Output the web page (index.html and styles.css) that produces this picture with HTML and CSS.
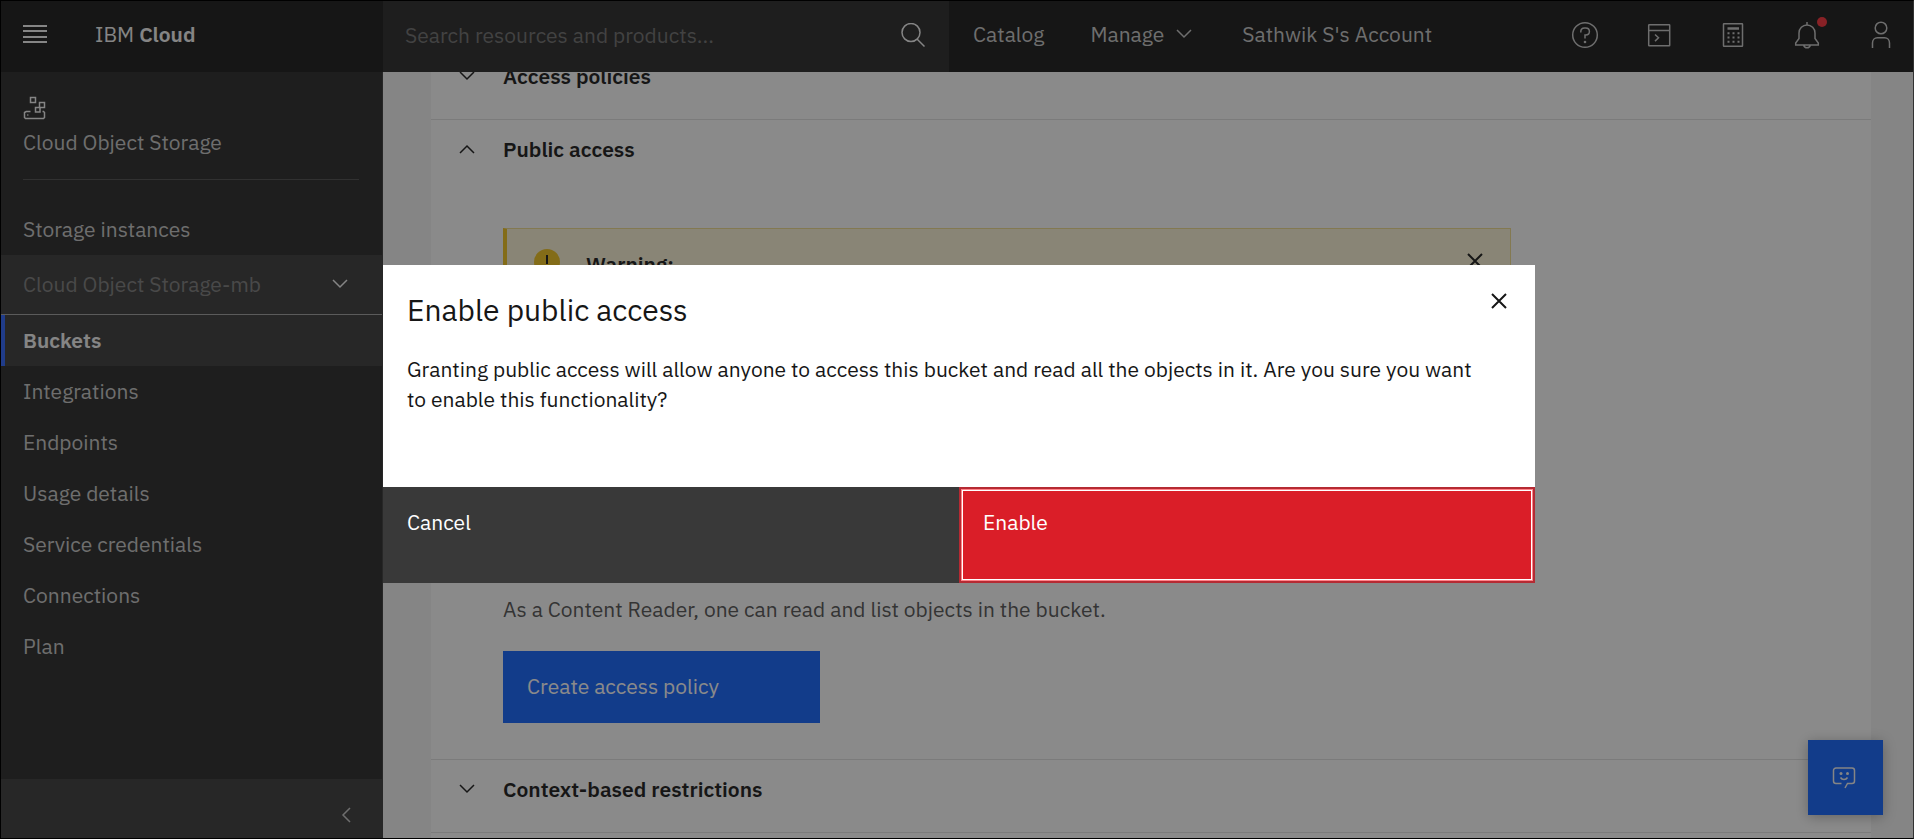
FILE: index.html
```html
<!DOCTYPE html>
<html lang="en">
<head>
<meta charset="utf-8">
<meta name="viewport" content="width=device-width, initial-scale=1">
<title>Buckets - IBM Cloud</title>
<link rel="stylesheet" href="styles.css">
</head>
<body>
<svg class="sprite" aria-hidden="true">
  <symbol id="chevron" viewBox="0 0 24 24"><path d="M5 8l7 7 7-7"/></symbol>
  <symbol id="close" viewBox="0 0 24 24"><path d="M5 5l14 14M19 5L5 19"/></symbol>
</svg>
<div class="page">
  <header class="topbar">
    <div class="brand">
      <button class="icon-button" type="button" aria-label="Menu">
        <svg class="icon-24 bright" viewBox="0 0 24 24"><path stroke-width="2" d="M0 4h24M0 9h24M0 15h24M0 20h24"/></svg>
      </button>
      <a class="brand-name" href="#">IBM <strong>Cloud</strong></a>
    </div>
    <form class="search">
      <input class="search-input" type="text" aria-label="Search" placeholder="Search resources and products...">
      <button class="icon-button" type="button" aria-label="Search">
        <svg class="icon-24 bright" viewBox="0 0 24 24"><ellipse cx="10" cy="9.500" rx="9" ry="9"/><path d="M16 16l7.500 7.500"/></svg>
      </button>
    </form>
    <nav class="top-links">
      <a class="top-link" href="#">Catalog</a>
      <button class="top-link" type="button">Manage <svg class="icon-24"><use href="#chevron"/></svg></button>
      <a class="top-link" href="#">Sathwik S's Account</a>
    </nav>
    <div class="tools">
      <button class="icon-button" type="button" aria-label="Help">
        <svg class="icon-30" viewBox="0 0 30 30"><circle cx="15" cy="15" r="12.300"/><path d="M10.800 12.500v-.7c0-2.200 1.500-3.800 3.700-3.800h1.200c2.100 0 3.700 1.500 3.700 3.500s-1.600 3.500-3.700 3.500H15v3.500"/><circle class="fill" cx="15" cy="22" r="1.300"/></svg>
      </button>
      <button class="icon-button" type="button" aria-label="Shell">
        <svg class="icon-30" viewBox="0 0 30 30"><rect x="4.700" y="4.700" width="21" height="21" rx=".5"/><path d="M5 10.500h20.500M11 14.500l3.500 3.300-3.500 3.300"/></svg>
      </button>
      <button class="icon-button" type="button" aria-label="Cost estimator">
        <svg class="icon-30" viewBox="0 0 30 30"><rect x="5.500" y="3.700" width="19" height="22.500" rx=".5"/><path stroke-width="2.500" d="M9.500 8.500h11.500"/><path stroke-width="2" stroke-dasharray="2 3" d="M9.500 13.300h12M9.500 17.500h12M9.500 21.700h12"/></svg>
      </button>
      <button class="icon-button alerts" type="button" aria-label="Notifications">
        <svg class="icon-30" viewBox="0 0 30 30"><path d="M15 2v3M15 5a8 8 0 0 0-8 8v5.500l-3.300 4.500v2h22.600v-2L23 18.500V13a8 8 0 0 0-8-8zM11.800 25.500a3.300 3 0 0 0 6.400 0"/></svg>
        <span class="alert-dot"></span>
      </button>
      <button class="icon-button" type="button" aria-label="Account">
        <svg class="icon-30" viewBox="0 0 30 30"><circle cx="15" cy="8" r="5.800"/><path d="M6.500 28v-5c0-3 2-5.200 5-5.200h7c3 0 5 2.200 5 5.200v5"/></svg>
      </button>
    </div>
  </header>
  <div class="body">
    <aside class="sidebar">
      <div class="service">
        <svg class="icon-24 bright" viewBox="0 0 24 24"><path d="M7.500 1.500h5v5h-5zM16.500 6.500h5v5h-5zM12.500 11.500h4.500v4.500h-4.500zM7.500 15.500H3.200l-1.700 1v5l1 1h18l1-1v-5l-1-1h-1"/><circle class="fill" cx="4.800" cy="19" r=".8"/></svg>
        <span>Cloud Object Storage</span>
      </div>
      <nav class="side-nav">
        <a class="side-link" href="#">Storage instances</a>
        <button class="instance" type="button"><span>Cloud Object Storage-mb</span><svg class="icon-24 bright"><use href="#chevron"/></svg></button>
        <a class="side-link selected" href="#">Buckets</a>
        <a class="side-link" href="#">Integrations</a>
        <a class="side-link" href="#">Endpoints</a>
        <a class="side-link" href="#">Usage details</a>
        <a class="side-link" href="#">Service credentials</a>
        <a class="side-link" href="#">Connections</a>
        <a class="side-link" href="#">Plan</a>
      </nav>
      <button class="collapse" type="button" aria-label="Collapse"><svg class="icon-24" viewBox="0 0 24 24"><path d="M15 5l-7 7 7 7"/></svg></button>
    </aside>
    <main class="content">
      <div class="accordion">
        <section class="panel first">
          <button class="panel-head" type="button"><svg class="icon-24"><use href="#chevron"/></svg>Access policies</button>
        </section>
        <section class="panel">
          <button class="panel-head" type="button"><svg class="icon-24" viewBox="0 0 24 24"><path d="M5 16l7-7 7 7"/></svg>Public access</button>
          <div class="panel-body">
            <div class="warning">
              <svg class="icon-26" viewBox="0 0 26 26"><circle class="disc" cx="13" cy="13" r="13"/><path d="M13 6v9M13 18v2"/></svg>
              <strong>Warning:</strong>
              <button class="icon-button dark" type="button" aria-label="Dismiss"><svg class="icon-24"><use href="#close"/></svg></button>
            </div>
            <div class="policy">
              <p class="policy-text">As a Content Reader, one can read and list objects in the bucket.</p>
              <button class="primary" type="button">Create access policy</button>
            </div>
          </div>
        </section>
        <section class="panel">
          <button class="panel-head" type="button"><svg class="icon-24"><use href="#chevron"/></svg>Context-based restrictions</button>
        </section>
        <section class="panel"></section>
      </div>
    </main>
  </div>
  <button class="chat" type="button" aria-label="Chat">
    <svg class="icon-24" viewBox="0 0 24 24"><path d="M9.500 17.500H4a2.500 2.500 0 0 1-2.500-2.500V4.500A2.500 2.500 0 0 1 4 2h16a2.500 2.500 0 0 1 2.500 2.500V15a2.500 2.500 0 0 1-2.500 2.500h-4.500L13 22M8.500 11.500c1.500 2.500 5.500 2.500 7 0"/><circle class="fill" cx="9" cy="7.500" r="1.500"/><circle class="fill" cx="15.500" cy="7.500" r="1.500"/></svg>
  </button>
</div>
<div class="overlay">
  <div class="modal" role="dialog" aria-labelledby="modal-title">
    <div class="modal-main">
      <div class="modal-head">
        <h1 class="modal-title" id="modal-title">Enable public access</h1>
        <button class="icon-button dark" type="button" aria-label="Close"><svg class="icon-24"><use href="#close"/></svg></button>
      </div>
      <p class="modal-text">Granting public access will allow anyone to access this bucket and read all the objects in it. Are you sure you want to enable this functionality?</p>
    </div>
    <div class="modal-actions">
      <button class="action cancel" type="button">Cancel</button>
      <button class="action enable" type="button">Enable</button>
    </div>
  </div>
</div>
</body>
</html>
```
FILE: styles.css
```css
* { box-sizing: border-box; }
body {
  margin: 0;
  font: 21px/30px "IBM Plex Sans", Roboto, sans-serif;
  color: #161616;
  background: #f4f4f4;
}
button, input {
  font: inherit;
  color: inherit;
  background: none;
  border: 0;
  border-radius: 0;
  padding: 0;
  text-align: left;
}
a { color: inherit; text-decoration: none; }
p, h1 { margin: 0; }
strong { font-weight: 600; }
svg { display: block; flex: none; fill: none; stroke: currentColor; stroke-width: 1.5; }
.sprite { position: absolute; width: 0; height: 0; }
.fill { fill: currentColor; stroke: none; }
.icon-24 { width: 24px; height: 24px; }
.icon-26 { width: 26px; height: 26px; }
.icon-30 { width: 30px; height: 30px; }
.icon-button { flex: none; }
.bright { color: #f4f4f4; }
.dark { color: #161616; }
.dark svg { stroke-width: 2; }

.page { height: 100vh; display: flex; flex-direction: column; overflow: hidden; }

.topbar {
  flex: none;
  height: 72px;
  display: flex;
  align-items: stretch;
  background: #161616;
  color: #c6c6c6;
}
.brand {
  flex: none;
  width: 383px;
  padding: 0 23px 4px;
  display: flex;
  align-items: center;
  gap: 48px;
}
.brand-name { color: #f4f4f4; }
.search {
  flex: none;
  width: 30%;
  max-width: 566px;
  padding: 0 24px 2px 22px;
  display: flex;
  align-items: center;
  background: #262626;
}
.search-input { flex: 1; min-width: 0; outline: 0; }
.search-input::placeholder { color: #6f6f6f; opacity: 1; }
.top-links { display: flex; align-items: center; gap: 46px; padding: 0 24px 4px; white-space: nowrap; }
.top-link { display: flex; align-items: center; gap: 8px; }
.tools { margin-left: auto; display: flex; align-items: center; gap: 44px; padding: 0 18px 2px 0; }
.alerts { position: relative; }
.alert-dot {
  position: absolute;
  top: -3px;
  right: -5px;
  width: 10px;
  height: 10px;
  border-radius: 50%;
  background: #fa2d36;
}

.body { flex: 1; min-height: 0; display: flex; }
.sidebar {
  flex: none;
  width: 383px;
  display: flex;
  flex-direction: column;
  background: #262626;
  color: #c6c6c6;
  border-right: 1px solid #393939;
}
.service {
  margin: 0 23px 24px;
  padding: 24px 0 22px;
  display: flex;
  flex-direction: column;
  gap: 7px;
  border-bottom: 1px solid #4d4d4d;
}
.side-nav { display: flex; flex-direction: column; }
.side-link { padding: 10px 23px 11px; }
.selected {
  padding-left: 18px;
  border-left: 5px solid #2a62ff;
  background: #393939;
  color: #f4f4f4;
  font-weight: 600;
}
.instance {
  padding: 14px 30px 15px 23px;
  display: flex;
  justify-content: space-between;
  align-items: center;
  background: #393939;
  color: #7d7d7d;
  border-bottom: 1px solid #a0a0a0;
}
.collapse {
  margin-top: auto;
  height: 60px;
  padding: 12px 23px 0;
  display: flex;
  align-items: center;
  justify-content: flex-end;
  background: #393939;
}

.content { flex: 1; min-width: 0; padding: 0 43px 0 48px; overflow: hidden; }
.accordion { margin-top: -26px; background: #fff; min-height: 100%; }
.panel { border-top: 1px solid #e0e0e0; padding-bottom: 28px; }
.panel-head {
  width: 100%;
  padding: 14px 24px 0;
  display: flex;
  align-items: center;
  gap: 24px;
  font-weight: 600;
}
.panel-body { padding: 64px 360px 8px 72px; }
.warning {
  height: 300px;
  padding: 20px 23px 0 27px;
  display: flex;
  align-items: flex-start;
  gap: 26px;
  background: #fcf4d6;
  border: 1px solid #f1dc8c;
  border-left: 4px solid #f1c21b;
}
.warning .icon-button { margin-left: auto; }
.disc { fill: #f1c21b; stroke: none; }
.warning .icon-26 { stroke-width: 2; }
.policy { padding-top: 66px; display: flex; flex-direction: column; align-items: flex-start; gap: 27px; }
.policy-text { color: #525252; }
.primary { min-width: 317px; padding: 20px 24px 22px; background: #0f62fe; color: #fff; }
.chat {
  position: fixed;
  right: 31px;
  bottom: 24px;
  width: 75px;
  height: 75px;
  padding-right: 3px;
  display: flex;
  align-items: center;
  justify-content: center;
  background: #0f62fe;
  color: #f4f4f4;
  box-shadow: 0 2px 12px rgba(0, 0, 0, 0.3);
}

.overlay {
  position: fixed;
  inset: 0;
  padding: 8px 0 0 4px;
  display: flex;
  align-items: center;
  justify-content: center;
  border: 1px solid #000;
  border-right-color: #333;
  background: rgba(22, 22, 22, 0.5);
}
.modal { width: 1152px; max-width: 92%; background: #fff; }
.modal-main { padding: 24px 24px 73px; }
.modal-head { display: flex; justify-content: space-between; align-items: flex-start; }
.modal-title { font-size: 30px; line-height: 42px; font-weight: 400; }
.modal-text { padding: 23px 24px 0 0; }
.modal-actions { display: grid; grid-template-columns: 1fr 1fr; }
.action { height: 96px; padding: 20px 24px; display: flex; align-items: flex-start; color: #fff; }
.cancel { background: #393939; }
.enable {
  padding: 18px 22px;
  background: #da1e28;
  border: 2px solid #b52a33;
  box-shadow: inset 0 0 0 1px #ff8389, inset 0 0 0 2px #fff;
}
```
